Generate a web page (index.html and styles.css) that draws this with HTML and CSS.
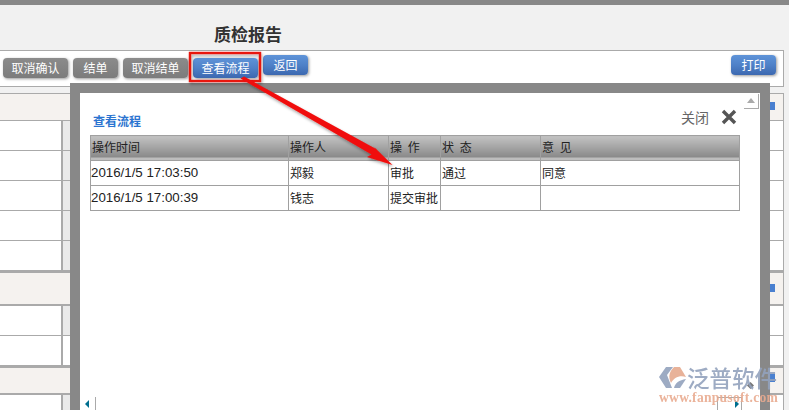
FILE: index.html
```html
<!DOCTYPE html>
<html lang="zh-CN">
<head>
<meta charset="utf-8">
<title>质检报告</title>
<link rel="stylesheet" href="styles.css">
</head>
<body>
<div class="page">
  <div class="topbar"></div>
  <header class="head"><h1 class="title">质检报告</h1></header>
  <div class="toolbar">
    <button class="btn gray low w65">取消确认</button>
    <button class="btn gray low w45">结单</button>
    <button class="btn gray low w65">取消结单</button>
    <button class="btn blue low w65">查看流程</button>
    <button class="btn blue w45">返回</button>
    <button class="btn blue w45 end">打印</button>
  </div>
  <div class="sheet">
    <div class="section first"><span class="add"></span></div>
    <div class="row"><i class="a"></i><i class="b"></i></div>
    <div class="row"><i class="a"></i><i class="b"></i></div>
    <div class="row"><i class="a"></i><i class="b"></i></div>
    <div class="row"><i class="a"></i><i class="b"></i></div>
    <div class="row"><i class="a"></i><i class="b"></i></div>
    <div class="section"><span class="add"></span></div>
    <div class="row"><i class="a"></i><i class="b"></i></div>
    <div class="row"><i class="a"></i><i class="c"></i></div>
    <div class="section short"><span class="add"></span></div>
    <div class="row"><i class="a"></i><i class="b"></i></div>
  </div>

  <section class="modal">
    <div class="modal-head">
      <h2 class="modal-title">查看流程</h2>
      <div class="close">关闭
        <svg class="close-x" viewBox="0 0 16 16" width="16" height="16"><path d="M2 2 14 14M14 2 2 14" stroke="#555" stroke-width="3.4" fill="none"/></svg>
      </div>
    </div>
    <table class="flow">
      <colgroup><col class="c1"><col class="c2"><col class="c3"><col class="c4"><col class="c5"></colgroup>
      <thead><tr><th>操作时间</th><th>操作人</th><th>操 作</th><th>状 态</th><th>意 见</th></tr></thead>
      <tbody>
        <tr><td class="num">2016/1/5 17:03:50</td><td>郑毅</td><td>审批</td><td>通过</td><td>同意</td></tr>
        <tr><td class="num">2016/1/5 17:00:39</td><td>钱志</td><td>提交审批</td><td></td><td></td></tr>
      </tbody>
    </table>
    <div class="scroll-up"><span></span></div>
    <div class="scroll-bottom">
      <span class="tri-l"></span><span class="trk-l"></span>
      <span class="trk-r"><span class="tri-r"></span></span>
      <span class="grip"></span>
    </div>
  </section>

  <svg class="annot" width="789" height="410" viewBox="0 0 789 410">
    <defs><filter id="sh" x="-10%" y="-10%" width="120%" height="120%"><feDropShadow dx="1" dy="2" stdDeviation="1.5" flood-color="#000" flood-opacity=".35"/></filter></defs>
    <g filter="url(#sh)">
      <rect x="190" y="53" width="70" height="28" fill="none" stroke="#e8120f" stroke-width="2.4"/>
      <path d="M240.500 78.500 244 76.500 377 149.500 373 146 392.500 165 367 157 371.500 154.500Z" fill="#f00d0a"/>
    </g>
  </svg>

  <div class="mark">
    <div class="mark-top">
      <svg width="28" height="24" viewBox="0 0 28 24"><path d="M7 1H14L8 9 13 22H7L0 11Z" fill="#93a2bd"/><path d="M15 1H21L27 11C20 9 15 12 12 17 9 11 10 6 15 1Z" fill="#e6aa8e"/><path d="M15 22C16 17 20 14 27 13L21 22Z" fill="#93a2bd"/></svg>
      <span>泛普软件</span>
    </div>
    <div class="mark-url">www.fanpusoft.com</div>
  </div>
</div>
</body>
</html>
```

FILE: styles.css
```css
* { box-sizing: border-box; }
html, body { margin: 0; padding: 0; }
body { font-family: "Noto Sans CJK SC", "Liberation Sans", sans-serif; }
.page { position: relative; width: 789px; height: 410px; overflow: hidden; background: #f1f1f1; }
.topbar { height: 5px; background: #888; }
.head { height: 45px; display: flex; align-items: flex-end; padding: 0 0 4px 214px; }
.title { margin: 0; font: bold 17px/24px "Noto Sans CJK SC", serif; color: #333; }
.toolbar { width: 784px; height: 37px; display: flex; align-items: flex-start; gap: 5px; padding: 4px 7px 0 3px; background: #fff; border: solid #aaa; border-width: 1px 1px 1px 0; }
.btn { height: 20px; padding: 0; border: 0; border-radius: 4px; color: #fff; font: 12px/20px "Noto Sans CJK SC", sans-serif; box-shadow: 1px 1px 3px rgba(0,0,0,.4); }
.w65 { width: 65px; }
.w45 { width: 45px; }
.low { margin-top: 3px; }
.end { margin-left: auto; }
.gray { background: linear-gradient(#8b8b8b, #7c7c7c); }
.blue { background: linear-gradient(#5e93d8 0, #4f81c8 50%, #3c68b0 100%); }
.sheet { width: 784px; margin-top: 6px; }
.section { position: relative; height: 35px; background: #f5f2ef; border-top: 2px solid #aaa; border-bottom: 2px solid #aaa; border-right: 1px solid #aaa; }
.section.first { height: 28px; border-top-width: 1px; border-bottom-width: 1px; }
.section.short { height: 29px; }
.add { position: absolute; left: 770px; top: 11px; width: 5px; height: 8px; background: #4a80d0; }
.first .add { top: 8px; }
.short .add { top: 6px; }
.row { display: flex; height: 30px; background: #fff; border-bottom: 1px solid #aaa; border-right: 1px solid #aaa; }
.a { display: block; width: 63px; border-right: 2px solid #aaa; }
.b { display: block; width: 7px; background: #eaeaea; }
.c { display: block; width: 7px; background: #fff; }
.modal { position: absolute; left: 70px; top: 83px; width: 700px; height: 340px; background: #fff; border: 10px solid #888; }
.modal-head { position: relative; height: 42px; }
.modal-title { position: absolute; left: 13px; top: 19px; margin: 0; font: bold 12px/18px "Noto Sans CJK SC", sans-serif; color: #2b74d0; }
.close { position: absolute; right: 23px; top: 14px; display: flex; align-items: center; gap: 12px; font-size: 14px; line-height: 20px; color: #666; }
.close-x { display: block; }
.flow { margin-left: 10px; width: 649px; border-collapse: collapse; table-layout: fixed; border: 1px solid #a0a0a0; }
.c1 { width: 198px; } .c2 { width: 100px; } .c3 { width: 52px; } .c4 { width: 100px; } .c5 { width: 199px; }
.flow th { height: 25px; padding: 0 0 2px 1px; text-align: left; font-weight: normal; font-size: 12px; line-height: 16px; color: #222; word-spacing: 3px; border: 1px solid #a0a0a0; background: linear-gradient(#c2c2c2 0, #888 88%, #bdbdbd 88%, #bdbdbd 100%); }
.flow td { height: 25px; padding: 0 0 0 1px; font-size: 12px; line-height: 16px; color: #222; border: 1px solid #a0a0a0; white-space: nowrap; }
.flow td.num { padding-left: 0; font: 13.3px/16px "Liberation Sans", sans-serif; }
.scroll-up { position: absolute; left: 664px; top: 1px; width: 15px; height: 15px; border: solid #aaa; border-width: 0 1px 1px 0; }
.scroll-up span { position: absolute; left: 3px; top: 4px; border: solid transparent; border-width: 0 4px 5px; border-bottom-color: #aaa; }
.scroll-bottom { position: absolute; left: 0; top: 304px; width: 680px; height: 20px; }
.tri-l { position: absolute; left: 5px; top: 3px; border: solid transparent; border-width: 4px 4px 4px 0; border-right-color: #006f8f; }
.trk-l { position: absolute; left: 15px; top: 0; height: 20px; border-left: 1px solid #aaa; }
.trk-r { position: absolute; left: 637px; top: 0; width: 25px; height: 20px; border: solid #aaa; border-width: 1px 1px 0; }
.tri-r { position: absolute; left: 17px; top: 2px; border: solid transparent; border-width: 4px 0 4px 4px; border-left-color: #006f8f; }
.grip { position: absolute; left: 668px; top: -14px; width: 5px; height: 5px; background: #777; transform: rotate(45deg); }
.annot { position: absolute; left: 0; top: 0; pointer-events: none; }
.mark { position: absolute; left: 659px; top: 365px; width: 125px; opacity: .9; }
.mark-top { display: flex; align-items: center; height: 25px; }
.mark-top span { font-size: 22.500px; line-height: 25px; font-weight: 500; color: #93a2bd; white-space: nowrap; }
.mark-url { font: bold 13.6px/13px "Liberation Serif", serif; letter-spacing: .25px; color: #e9ab90; white-space: nowrap; margin-top: 1px; }
```
